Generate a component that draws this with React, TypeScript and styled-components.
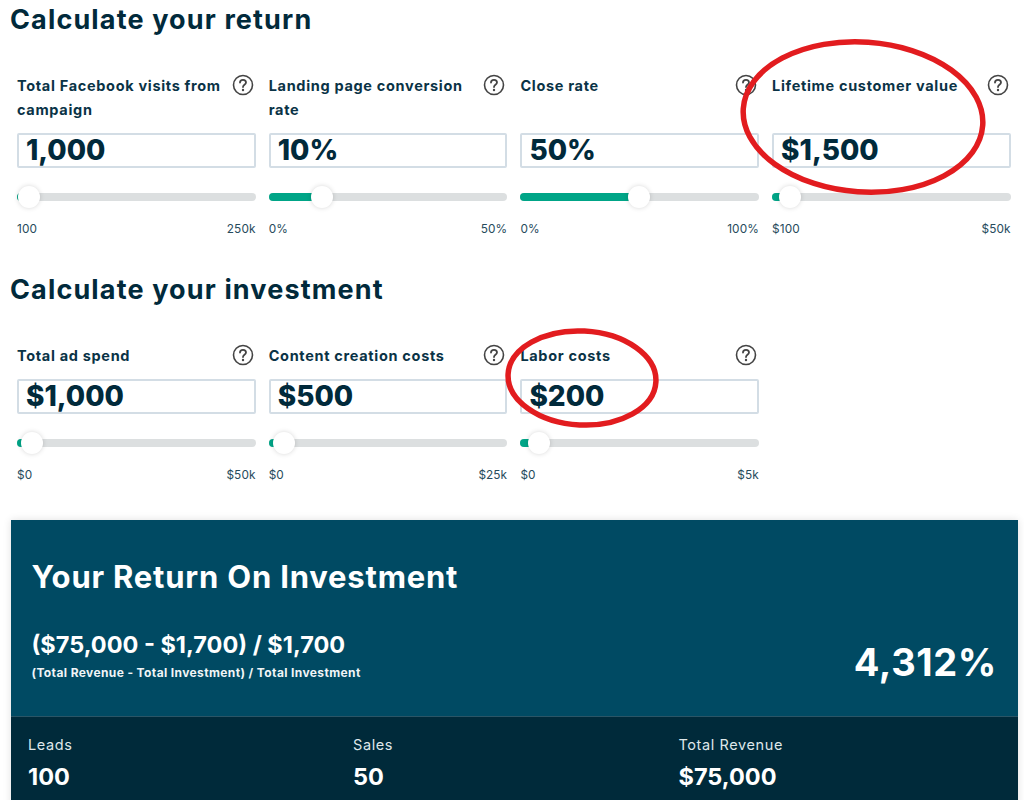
import React from "react";
import styled, { createGlobalStyle } from "styled-components";

const Global = createGlobalStyle`
  html, body { margin: 0; padding: 0; background: #fff; height: 800px; overflow: hidden; }
  body { font-family: Inter, "Liberation Sans", sans-serif; color: #012a3b; }
`;
const Page = styled.div`
  position: relative;
  width: 1024px;
  height: 800px;
  overflow: hidden;
  padding-top: 4px;
  box-sizing: border-box;
`;
const Heading = styled.h2`
  margin: 0 0 0 10px;
  font-size: 27px;
  line-height: 32px;
  font-weight: 700;
  letter-spacing: 1.14px;
  color: #012a3b;
`;
const Grid = styled.div<{ $labelHeight: number }>`
  display: grid;
  grid-template-columns: repeat(4, 238.5px);
  column-gap: 13.2px;
  margin: 38px 0 0 17px;
  --label-h: ${(p) => p.$labelHeight}px;
`;
const Field = styled.div`
  display: flex;
  flex-direction: column;
`;
const LabelRow = styled.div`
  display: flex;
  justify-content: space-between;
  height: var(--label-h);
`;
const Label = styled.div`
  font-size: 14.5px;
  line-height: 24px;
  font-weight: 700;
  letter-spacing: 0.68px;
  width: 212px;
  color: #0a3346;
`;
const Help = styled.svg`
  width: 22px;
  height: 22px;
  margin: 0 2px 0 0;
  flex: none;
`;
const ValueBox = styled.div`
  height: 35px;
  border: 2px solid #d3dde5;
  border-radius: 2px;
  box-sizing: border-box;
  padding-left: 7px;
  font-size: 28px;
  line-height: 31px;
  font-weight: 800;
  color: #012a3b;
`;
const Track = styled.div`
  position: relative;
  margin-top: 25px;
  height: 8px;
  border-radius: 4px;
  background: #dcdfe0;
`;
const Fill = styled.div`
  height: 100%;
  border-radius: 4px 0 0 4px;
  background: #00a587;
`;
const Thumb = styled.div`
  position: absolute;
  top: -7px;
  width: 22px;
  height: 22px;
  border-radius: 50%;
  background: #fff;
  box-shadow: 0 0 5px rgba(0, 0, 0, 0.16);
`;
const Range = styled.div`
  display: flex;
  justify-content: space-between;
  margin-top: 21px;
  font-size: 11.8px;
  line-height: 14px;
  color: #274b5c;
  letter-spacing: 0.1px;
`;
const SecondHeading = styled(Heading)`
  margin-top: 38px;
`;
const Panel = styled.section`
  margin: 38px 0 0 11px;
  width: 1007px;
  box-shadow: 0 0 8px rgba(0, 0, 0, 0.12);
`;
const PanelTop = styled.div`
  background: #004a63;
  height: 197px;
  box-sizing: border-box;
  padding: 37px 21px 0 20.5px;
  display: flex;
  flex-direction: column;
  border-bottom: 1px solid #2a5566;
`;
const PanelTitle = styled.div`
  font-size: 31px;
  line-height: 40px;
  font-weight: 700;
  letter-spacing: 0.8px;
  color: #fff;
`;
const FormulaRow = styled.div`
  display: flex;
  justify-content: space-between;
  align-items: center;
  margin-top: 26px;
`;
const Formula = styled.div`
  font-size: 23.5px;
  line-height: 30px;
  font-weight: 700;
  color: #fff;
`;
const FormulaNote = styled.div`
  font-size: 12px;
  line-height: 14px;
  margin-top: 6px;
  font-weight: 700;
  color: #f0f5f7;
  letter-spacing: 0.38px;
`;
const Roi = styled.div`
  font-size: 38px;
  line-height: 48px;
  padding-top: 15px;
  font-weight: 700;
  letter-spacing: 0.6px;
  color: #fff;
`;
const PanelBottom = styled.div`
  background: #002a3a;
  height: 100px;
  display: grid;
  grid-template-columns: 325px 325.5px 1fr;
  padding: 19px 0 0 17px;
  box-sizing: border-box;
`;
const StatLabel = styled.div`
  font-size: 14.5px;
  line-height: 18px;
  letter-spacing: 0.6px;
  color: #dfe7ea;
`;
const StatValue = styled.div`
  font-size: 23.5px;
  line-height: 30px;
  margin-top: 8px;
  font-weight: 700;
  color: #fff;
`;
const Oval = styled.svg`
  position: absolute;
  left: 0;
  top: 0;
  width: 1024px;
  height: 800px;
  pointer-events: none;
`;

const HelpIcon = () => (
  <Help viewBox="0 0 22 22" fill="none">
    <circle cx="11" cy="11" r="9.5" stroke="#444" strokeWidth="1.6" />
    <path d="M8 8.6c0-1.8 1.4-2.8 3-2.8s3 1 3 2.6c0 2.4-3 2.4-3 4.6" stroke="#444" strokeWidth="1.8" strokeLinecap="round" />
    <circle cx="11" cy="16" r="1.2" fill="#444" />
  </Help>
);

type F = { label: string; value: string; pct: number; min: string; max: string };

const SliderField = ({ label, value, pct, min, max }: F) => (
  <Field>
    <LabelRow>
      <Label>{label}</Label>
      <HelpIcon />
    </LabelRow>
    <ValueBox>{value}</ValueBox>
    <Track>
      <Fill style={{ width: `${pct}px` }} />
      <Thumb style={{ left: `${pct - 11}px` }} />
    </Track>
    <Range>
      <span>{min}</span>
      <span>{max}</span>
    </Range>
  </Field>
);

const ret: F[] = [
  { label: "Total Facebook visits from campaign", value: "1,000", pct: 12, min: "100", max: "250k" },
  { label: "Landing page conversion rate", value: "10%", pct: 53, min: "0%", max: "50%" },
  { label: "Close rate", value: "50%", pct: 119, min: "0%", max: "100%" },
  { label: "Lifetime customer value", value: "$1,500", pct: 18, min: "$100", max: "$50k" },
];
const inv: F[] = [
  { label: "Total ad spend", value: "$1,000", pct: 15, min: "$0", max: "$50k" },
  { label: "Content creation costs", value: "$500", pct: 15, min: "$0", max: "$25k" },
  { label: "Labor costs", value: "$200", pct: 19, min: "$0", max: "$5k" },
];

export default function App() {
  return (
    <Page>
      <Global />
      <Heading>Calculate your return</Heading>
      <Grid $labelHeight={59}>
        {ret.map((f) => (
          <SliderField key={f.label} {...f} />
        ))}
      </Grid>
      <SecondHeading>Calculate your investment</SecondHeading>
      <Grid $labelHeight={35}>
        {inv.map((f) => (
          <SliderField key={f.label} {...f} />
        ))}
      </Grid>
      <Panel>
        <PanelTop>
          <PanelTitle>Your Return On Investment</PanelTitle>
          <FormulaRow>
            <div>
              <Formula>($75,000 - $1,700) / $1,700</Formula>
              <FormulaNote>(Total Revenue - Total Investment) / Total Investment</FormulaNote>
            </div>
            <Roi>4,312%</Roi>
          </FormulaRow>
        </PanelTop>
        <PanelBottom>
          <div>
            <StatLabel>Leads</StatLabel>
            <StatValue>100</StatValue>
          </div>
          <div>
            <StatLabel>Sales</StatLabel>
            <StatValue>50</StatValue>
          </div>
          <div>
            <StatLabel>Total Revenue</StatLabel>
            <StatValue>$75,000</StatValue>
          </div>
        </PanelBottom>
      </Panel>
      <Oval viewBox="0 0 1024 800" fill="none">
        <ellipse cx="863" cy="117" rx="120" ry="75" stroke="#e21c1f" strokeWidth="5.5" transform="rotate(4 863 117)" />
        <ellipse cx="582" cy="378" rx="74" ry="47" stroke="#e21c1f" strokeWidth="5.5" transform="rotate(3 582 378)" />
      </Oval>
    </Page>
  );
}
